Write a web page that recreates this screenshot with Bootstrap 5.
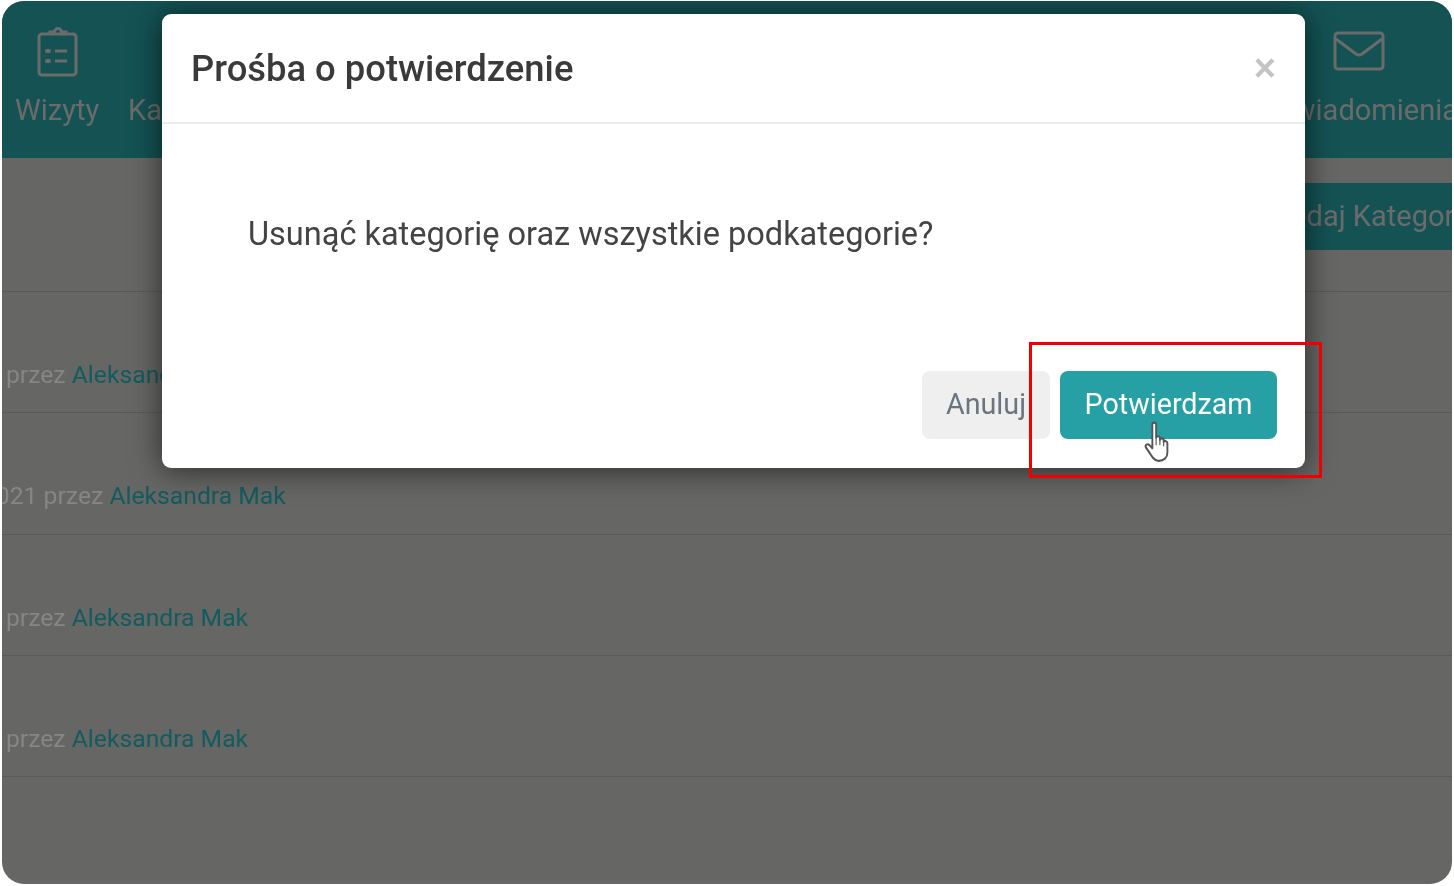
<!DOCTYPE html>
<html lang="pl">
<head>
  <meta charset="UTF-8">
  <title>Prośba o potwierdzenie</title>
  <link href="https://cdn.jsdelivr.net/npm/bootstrap@5.3.3/dist/css/bootstrap.min.css" rel="stylesheet">
  <style>
    html, body {
      height: 100%;
      background: #fff;
      overflow: hidden;
    }
    body {
      padding: 1px 2px 2px;
      font-family: Roboto, "Liberation Sans", sans-serif;
    }
    .app-frame {
      position: relative;
      height: 883px;
      overflow: hidden;
      border-radius: 22px;
      background: #666665;
      filter: blur(.6px);
    }
    .top-bar {
      height: 157px;
      background: #145254;
      padding: 24px 0 0 13px;
      color: #6b6b6b;
      font-size: 29px;
    }
    .top-item {
      display: flex;
      flex-direction: column;
      align-items: center;
      white-space: nowrap;
    }
    .top-item span {
      margin-top: 15px;
      line-height: 36px;
    }
    .top-second {
      margin-left: 5px;
      padding-top: 52px;
    }
    .top-last {
      margin-right: -6px;
    }
    .add-btn {
      height: 67px;
      width: 260px;
      margin-top: 25px;
      margin-right: -48px;
      padding-left: 31px;
      display: flex;
      align-items: center;
      background: #145254;
      color: #6b6b6b;
      font-size: 29px;
      white-space: nowrap;
    }
    .tool-row {
      height: 134px;
      border-bottom: 1px solid #5a5a5a;
    }
    .log-row {
      height: 121.3px;
      border-bottom: 1px solid #5a5a5a;
      padding: 68px 0 0 4px;
      font-size: 24.7px;
      line-height: 30px;
      color: #868686;
      white-space: nowrap;
    }
    .log-row a {
      color: #125c60;
      text-decoration: none;
    }
    .log-shift {
      margin-left: -24px;
    }
    .confirm-box {
      position: absolute;
      left: 160px;
      top: 13px;
      width: 1143px;
      height: 454px;
      margin: 0;
      max-width: none;
    }
    .confirm-box .modal-content {
      height: 100%;
      background: #fff;
      border: 0;
      border-radius: 9px;
      box-shadow: 0 2px 30px rgba(0, 0, 0, .6);
    }
    .confirm-box .modal-header {
      height: 110px;
      padding: 2px 29px 0;
      border-bottom: 2px solid #ececec;
    }
    .confirm-box .modal-title {
      font-size: 36.4px;
      font-weight: 500;
      color: #3a3a3a;
    }
    .close-x {
      border: 0;
      background: none;
      padding: 0;
      margin-top: -2px;
      font-size: 38px;
      line-height: 1;
      font-weight: 700;
      color: #c4c4c4;
      font-family: "Liberation Sans", sans-serif;
    }
    .confirm-box .modal-body {
      padding: 90px 0 0 86px;
      font-size: 32.5px;
      line-height: 40px;
      color: #444;
    }
    .confirm-box .modal-footer {
      padding: 0 28px 29px 0;
      border: 0;
      gap: 10px;
    }
    .confirm-box .btn {
      height: 68px;
      margin: 0;
      border: 0;
      border-radius: 8px;
      font-size: 28.7px;
    }
    .btn-cancel {
      width: 128px;
      background: #efefef;
      color: #6c757d;
    }
    .btn-confirm {
      width: 217px;
      background: #269fa5;
      color: #fff;
    }
    .mark-box {
      position: absolute;
      left: 1027px;
      top: 341px;
      width: 293px;
      height: 136px;
      border: 3px solid #f00000;
      pointer-events: none;
    }
    .hand-cursor {
      position: absolute;
      left: 1140px;
      top: 420px;
    }
  </style>
</head>
<body>
  <div class="app-frame">
    <div class="top-bar d-flex justify-content-between">
      <div class="d-flex gap-4">
        <div class="top-item">
          <svg width="42" height="52" viewBox="0 0 42 52" fill="none" stroke="#6b6b6b" stroke-width="3">
            <rect x="3" y="9" width="37" height="41" rx="3"/>
            <path d="M14 9V7h4.500a3.500 3.500 0 0 1 7 0H30v2"/>
            <path d="M19 26h12M19 36h12"/>
            <path d="M11 26h2M11 36h2" stroke-linecap="round" stroke-width="4"/>
          </svg>
          <span>Wizyty</span>
        </div>
        <div class="top-item top-second"><span>Kalendarz</span></div>
      </div>
      <div class="top-item top-last">
        <svg width="52" height="52" viewBox="0 0 52 52" fill="none" stroke="#6b6b6b" stroke-width="3">
          <rect x="2" y="8" width="48" height="36" rx="3"/>
          <path d="M3 14l20 15q3 2 6 0l20-15"/>
        </svg>
        <span>Powiadomienia</span>
      </div>
    </div>
    <div class="tool-row d-flex justify-content-end">
      <div class="add-btn">Dodaj Kategorię</div>
    </div>
    <div class="log-row">przez <a href="#">Aleksandra Mak</a></div>
    <div class="log-row"><span class="d-inline-block log-shift">2021 przez <a href="#">Aleksandra Mak</a></span></div>
    <div class="log-row">przez <a href="#">Aleksandra Mak</a></div>
    <div class="log-row">przez <a href="#">Aleksandra Mak</a></div>

    <div class="modal-dialog confirm-box">
      <div class="modal-content">
        <div class="modal-header">
          <h5 class="modal-title">Prośba o potwierdzenie</h5>
          <button type="button" class="close-x">×</button>
        </div>
        <div class="modal-body">Usunąć kategorię oraz wszystkie podkategorie?</div>
        <div class="modal-footer">
          <button type="button" class="btn btn-cancel">Anuluj</button>
          <button type="button" class="btn btn-confirm">Potwierdzam</button>
        </div>
      </div>
    </div>

    <div class="mark-box"></div>
    <svg class="hand-cursor" width="32" height="42" viewBox="0 0 34 40" preserveAspectRatio="none">
      <path d="M11 3c0-2 4-2 4 0v13c0-2 4-2 4 0v2c0-2 4-2 4 0v2c0-2 4-1 4 1v9c0 5-4 8-9 8-4 0-6-2-8-5l-6-8c-1-2 2-4 4-2l3 3z" fill="#fff" stroke="#555" stroke-width="2" stroke-linejoin="round"/>
      <path d="M15 16v7M19 18v5M23 20v4" stroke="#555" stroke-width="1.200"/>
    </svg>
  </div>

  <script src="https://cdn.jsdelivr.net/npm/bootstrap@5.3.3/dist/js/bootstrap.bundle.min.js"></script>
</body>
</html>
